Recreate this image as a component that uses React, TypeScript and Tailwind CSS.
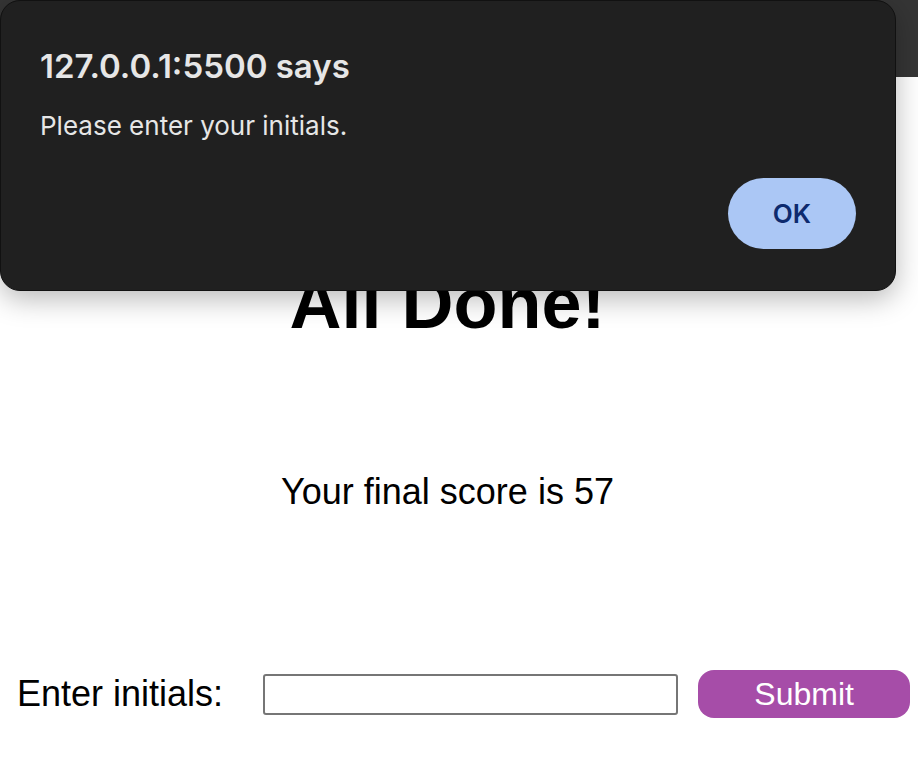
export default function App() {
  return (
    <div className="relative h-[770px] w-[918px] overflow-hidden bg-white font-['Liberation_Sans',Arial,sans-serif] text-black">
      <header className="h-[77px] bg-[#353535]" />

      <main className="flex w-[895px] flex-col">
        <h1 className="mt-[190px] text-center text-[72px] font-bold leading-none">
          All Done!
        </h1>
        <p className="mt-[135px] text-center text-[36px] leading-none">
          Your final score is 57
        </p>
        <form
          className="mt-[160px] flex w-[918px] items-center pl-[17px]"
          onSubmit={(e) => e.preventDefault()}
        >
          <label htmlFor="initials" className="text-[36px] leading-none">
            Enter initials:
          </label>
          <input
            id="initials"
            type="text"
            className="ml-[40px] h-[41px] w-[415px] rounded-[3px] border-2 border-[#767676] bg-white"
          />
          <button
            type="submit"
            className="ml-[20px] h-[48px] w-[212px] rounded-[16px] bg-[#a64da8] text-[32px] leading-none text-white"
          >
            Submit
          </button>
        </form>
      </main>

      <div className="absolute left-0 top-0 flex h-[291px] w-[896px] flex-col rounded-[20px] border border-[#111] bg-[#202020] px-[39px] pt-[49px] font-['Inter',sans-serif] shadow-[0_8px_28px_rgba(0,0,0,0.28)]">
        <h2 className="text-[33px] font-semibold leading-none text-[#e6e6e6]">
          127.0.0.1:5500 says
        </h2>
        <p className="mt-[30px] text-[26px] leading-none text-[#e6e6e6]">
          Please enter your initials.
        </p>
        <div className="mt-auto mb-[41px] flex justify-end">
          <button className="h-[71px] w-[128px] rounded-full bg-[#abc7f5] text-[26px] font-semibold text-[#0d2a6e]">
            OK
          </button>
        </div>
      </div>
    </div>
  )
}
